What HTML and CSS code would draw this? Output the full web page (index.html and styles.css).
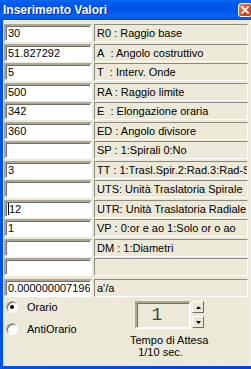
FILE: index.html
```html
<!DOCTYPE html>
<html lang="it">
<head>
  <meta charset="UTF-8" />
  <title>Inserimento Valori</title>
  <link rel="stylesheet" href="styles.css">
</head>
<body>

  <div class="window">
    <div class="titlebar">
      <span class="title">Inserimento Valori</span>
      <span class="close-btn">
        <svg width="8" height="8" viewBox="0 0 8 8"><path d="M1 1L7 7M7 1L1 7" stroke="#fff" stroke-width="1.8" stroke-linecap="square"/></svg>
      </span>
    </div>

    <div class="client">
      <div class="fields">
        <div class="field">30</div><div class="caption">R0 : Raggio base</div>
        <div class="field">51.827292</div><div class="caption">A&nbsp; : Angolo costruttivo</div>
        <div class="field">5</div><div class="caption">T&nbsp; : Interv. Onde</div>
        <div class="field">500</div><div class="caption">RA : Raggio limite</div>
        <div class="field">342</div><div class="caption">E&nbsp; : Elongazione oraria</div>
        <div class="field">360</div><div class="caption">ED : Angolo divisore</div>
        <div class="field"></div><div class="caption">SP : 1:Spirali 0:No</div>
        <div class="field">3</div><div class="caption">TT : 1:Trasl.Spir.2:Rad.3:Rad-S</div>
        <div class="field"></div><div class="caption">UTS: Unità Traslatoria Spirale</div>
        <div class="field"><span class="caret"></span>12</div><div class="caption">UTR: Unità Traslatoria Radiale</div>
        <div class="field">1</div><div class="caption">VP : 0:or e ao 1:Solo or o ao</div>
        <div class="field"></div><div class="caption">DM : 1:Diametri</div>
        <div class="field"></div><div class="caption"></div>
      </div>
      <div class="fields last">
        <div class="field">0.000000007196</div><div class="caption">a'/a</div>
      </div>

      <div class="bottom">
        <div class="radios">
          <label class="radio"><span class="radio-dot checked"></span>Orario</label>
          <label class="radio"><span class="radio-dot"></span>AntiOrario</label>
        </div>
        <div class="timer">
          <div class="spin">
            <div class="spin-value">1</div>
            <div class="spin-buttons">
              <span class="spin-btn"><svg width="5" height="3" viewBox="0 0 5 3"><path d="M2.5 0L5 3H0Z" fill="#000"/></svg></span>
              <span class="spin-btn"><svg width="5" height="3" viewBox="0 0 5 3"><path d="M0 0H5L2.5 3Z" fill="#000"/></svg></span>
            </div>
          </div>
          <div class="timer-label">Tempo di Attesa<br>1/10 sec.</div>
        </div>
      </div>
    </div>
  </div>

</body>
</html>
```

FILE: styles.css
```css
body {
  margin: 0;
  font-family: "Liberation Sans", Arial, sans-serif;
  font-size: 11px;
  color: #000;
}
.window {
  width: 251px;
  height: 369px;
  overflow: hidden;
  display: flex;
  flex-direction: column;
  background: linear-gradient(to right, #0053e1, #0a3ed8);
}
/* XP caption bar */
.titlebar {
  height: 20px;
  flex: none;
  display: flex;
  align-items: center;
  padding-left: 3px;
  background: linear-gradient(to bottom, #0a6af0 0, #0058ee 3px, #0054e6 10px, #0a62f7 16px, #0050e0 20px);
}
.title {
  flex: 1;
  color: #fff;
  font-weight: bold;
  font-size: 12px;
  text-shadow: 1px 1px 0 #0a2aa0;
}
.close-btn {
  flex: none;
  width: 14px;
  height: 14px;
  margin-right: -1px;
  box-sizing: border-box;
  border: 1px solid #fff;
  border-radius: 3px;
  background: linear-gradient(135deg, #f08a6a, #dc4a22 50%, #c23510);
  display: flex;
  align-items: center;
  justify-content: center;
}
.client {
  flex: 1;
  margin: 0 0 3px 3px;
  padding: 4px 2px 0 1px;
  background: #ece9d8;
  border-right: 1px solid #f4f3ec;
}
.fields {
  display: grid;
  grid-template-columns: 88px 1fr;
  grid-auto-rows: 18px;
  column-gap: 2px;
  row-gap: 1.5px;
}
.fields.last {
  margin-top: 3px;
}
/* sunken text box */
.field {
  box-sizing: border-box;
  background: #fff;
  border: 2px solid;
  border-color: #aca899 #fff #fff #aca899;
  box-shadow: inset 1px 1px 0 #716f64;
  padding-left: 2px;
  line-height: 14px;
  white-space: nowrap;
  overflow: hidden;
}
.caret {
  display: inline-block;
  width: 1px;
  height: 12px;
  background: #000;
  vertical-align: -2px;
}
.caption {
  box-sizing: border-box;
  border: 1px solid;
  border-color: #8c8a80 #fff #fff #8c8a80;
  padding-left: 2px;
  line-height: 16px;
  white-space: nowrap;
  overflow: hidden;
}
.bottom {
  display: flex;
  padding-top: 4px;
}
.radios {
  width: 124px;
  display: flex;
  flex-direction: column;
  gap: 10px;
  padding-left: 2px;
}
.radio {
  display: flex;
  align-items: center;
  height: 12px;
  gap: 9px;
}
.radio-dot {
  width: 12px;
  height: 12px;
  box-sizing: border-box;
  border-radius: 50%;
  border: 1px solid;
  border-color: #aca899 #fff #fff #aca899;
  box-shadow: inset 1px 1px 0 #716f64;
  background: #fff;
  display: flex;
  align-items: center;
  justify-content: center;
}
.radio-dot.checked::after {
  content: "";
  width: 4px;
  height: 4px;
  border-radius: 50%;
  background: #000;
}
.spin {
  display: flex;
  gap: 1px;
  margin-left: 5px;
}
.spin-value {
  width: 56px;
  height: 28px;
  box-sizing: border-box;
  border: 2px solid;
  border-color: #aca899 #fff #fff #aca899;
  box-shadow: inset 1px 1px 0 #716f64;
  background: #ece9d8;
  font-family: "Liberation Mono", "Courier New", monospace;
  font-size: 18px;
  line-height: 24px;
  color: #444;
  text-align: center;
  padding-right: 12px;
}
.spin-buttons {
  display: flex;
  flex-direction: column;
  gap: 3px;
}
.spin-btn {
  width: 12px;
  height: 12px;
  box-sizing: border-box;
  border: 1px solid;
  border-color: #fff #716f64 #716f64 #fff;
  background: #ece9d8;
  display: flex;
  align-items: center;
  justify-content: center;
}
.timer-label {
  width: 61px;
  margin-top: 5px;
  line-height: 12px;
  text-align: center;
  white-space: nowrap;
}
```
